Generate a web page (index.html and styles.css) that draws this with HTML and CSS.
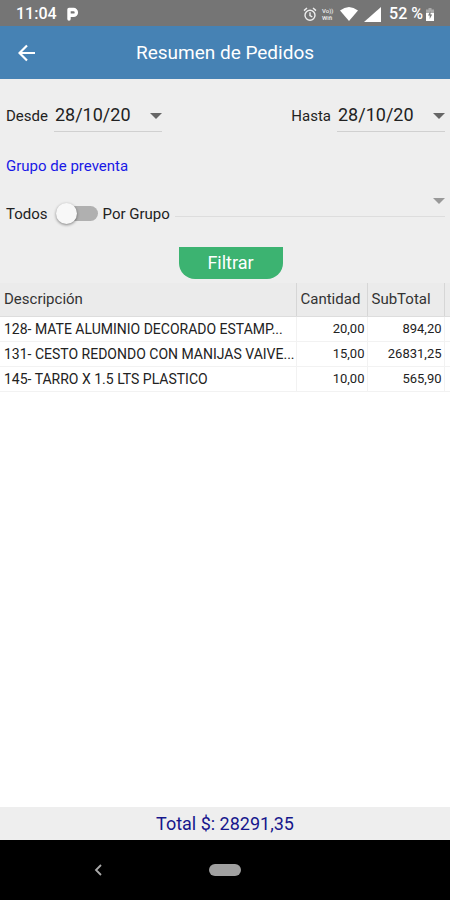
FILE: index.html
```html
<!DOCTYPE html>
<html lang="es">
<head>
<meta charset="utf-8">
<meta name="viewport" content="width=device-width, initial-scale=1">
<title>Resumen de Pedidos</title>
<link rel="stylesheet" href="styles.css">
</head>
<body>
<div class="status">
  <span class="status-time">11:04</span>
  <svg class="status-app" width="12" height="14" viewBox="0 0 12 14" aria-hidden="true"><path d="M2 12V2.500H6.500A2.900 2.900 0 0 1 6.500 8.300H3" fill="none" stroke="#fff" stroke-width="3.400" stroke-linecap="round" stroke-linejoin="round"/></svg>
  <div class="status-icons">
    <svg width="14" height="15" viewBox="0 0 14 15" aria-hidden="true"><g fill="none" stroke="#eee" stroke-width="1.400"><circle cx="7" cy="8.300" r="5"/><path d="M1 3.600 4 1M13 3.600 10 1M7 5.300V8.500L9.300 10"/></g></svg>
    <span class="vowifi"><span>Vo))</span><span>Wifi</span></span>
    <svg width="18" height="14" viewBox="0 0 18 14" aria-hidden="true"><path d="M0 3.500Q9-3.500 18 3.500L9 14Z" fill="#fff"/></svg>
    <svg class="signal" width="17" height="15" viewBox="0 0 17 15" aria-hidden="true"><path d="M0 15 17 0V15Z" fill="#fff"/></svg>
    <span>52 %</span>
    <svg width="8" height="13" viewBox="0 0 8 13" aria-hidden="true"><path d="M2.500 0h3v1.500H8V5H0V1.500h2.500Z" fill="#aaa"/><path d="M0 5H8V13H0Z" fill="#fff"/><path d="M4.500 3 2 7.500H3.700V11L6.200 6.500H4.500Z" fill="#777"/></svg>
  </div>
</div>
<header class="appbar">
  <button class="back" type="button" aria-label="Volver"><svg width="18" height="18" viewBox="0 0 18 18" aria-hidden="true"><path d="M17 9H2M9 1.500 1.500 9 9 16.500" fill="none" stroke="#fff" stroke-width="2.200"/></svg></button>
  <h1>Resumen de Pedidos</h1>
</header>
<main>
  <form class="filters">
    <div class="dates">
      <div class="field"><label for="desde">Desde</label><span class="picker"><select id="desde"><option>28/10/20</option></select></span></div>
      <div class="field"><label for="hasta">Hasta</label><span class="picker"><select id="hasta"><option>28/10/20</option></select></span></div>
    </div>
    <h2>Grupo de preventa</h2>
    <div class="group">
      <label for="modo">Todos</label>
      <input class="switch" id="modo" type="checkbox" role="switch">
      <label for="grupo">Por Grupo</label>
      <span class="picker picker-group"><select id="grupo" disabled><option></option></select></span>
    </div>
    <button class="filter" type="button">Filtrar</button>
  </form>
  <table>
    <colgroup><col><col class="col-qty"><col class="col-sub"><col class="col-end"></colgroup>
    <thead><tr><th>Descripción</th><th>Cantidad</th><th>SubTotal</th><td></td></tr></thead>
    <tbody>
      <tr><td>128- MATE ALUMINIO DECORADO ESTAMP...</td><td>20,00</td><td>894,20</td><td></td></tr>
      <tr><td>131- CESTO REDONDO CON MANIJAS VAIVE...</td><td>15,00</td><td>26831,25</td><td></td></tr>
      <tr><td>145- TARRO X 1.5 LTS PLASTICO</td><td>10,00</td><td>565,90</td><td></td></tr>
    </tbody>
  </table>
</main>
<footer class="total">Total $: 28291,35</footer>
<nav class="navbar">
  <button type="button" aria-label="Atrás"><svg width="8" height="12" viewBox="0 0 8 12" aria-hidden="true"><path d="M7 1 2 6 7 11" fill="none" stroke="#aaa" stroke-width="1.800"/></svg></button>
  <button class="home" type="button" aria-label="Inicio"></button>
</nav>
</body>
</html>
```
FILE: styles.css
```css
* { box-sizing: border-box; }
body {
  margin: 0;
  min-height: 100vh;
  display: flex;
  flex-direction: column;
  background: #fff;
  color: #222;
  font: 15px/20px Roboto, sans-serif;
}
button { border: 0; padding: 0; background: none; font: inherit; }
svg { display: block; }
h1, h2 { margin: 0; font-weight: 400; }

.status {
  display: flex;
  align-items: center;
  height: 26px;
  padding: 2px 16px 0;
  background: #757575;
  color: #fff;
  font-size: 16px;
  font-weight: 500;
}
.status-app { margin-left: 10px; }
.status-icons { display: flex; align-items: center; gap: 3px; margin-left: auto; }
.vowifi { display: flex; flex-direction: column; width: 14px; margin: 0 1px 0 2px; font-size: 6px; line-height: 7px; color: #eee; }
.signal { margin: 0 5px 0 3px; }

.appbar {
  display: grid;
  grid-template-columns: 36px 1fr 36px;
  align-items: center;
  height: 53px;
  background: #4682b4;
  color: #fff;
}
.back { display: flex; justify-content: flex-end; }
.appbar h1 { font-size: 19px; line-height: 24px; text-align: center; }

.filters { padding: 20px 5px 4px 6px; background: #eee; }
.dates { display: flex; justify-content: space-between; }
.field { display: flex; align-items: center; gap: 6px; height: 33px; }
.picker {
  position: relative;
  display: block;
  width: 108px;
  height: 33px;
  border-bottom: 1px solid #d0d0d0;
}
.picker::after {
  content: "";
  position: absolute;
  top: 14px;
  right: 0;
  border: 6px solid transparent;
  border-top-color: #666;
  border-bottom: 0;
}
.picker select {
  appearance: none;
  width: 100%;
  height: 32px;
  border: 0;
  padding: 0 0 0 1px;
  background: none;
  color: #222;
  font: 18px/24px Roboto, sans-serif;
}
.filters h2 { margin: 24px 0; color: #1919e6; font-size: 15px; line-height: 20px; }
.group { display: flex; align-items: center; height: 27px; gap: 5px; }
.switch {
  appearance: none;
  position: relative;
  width: 42px;
  height: 15px;
  margin: 0 0 0 3px;
  border-radius: 8px;
  background: linear-gradient(90deg, transparent 8px, #b0b0b0 8px);
}
.switch::before {
  content: "";
  position: absolute;
  top: -3px;
  left: 0;
  width: 21px;
  height: 21px;
  border-radius: 50%;
  background: #f8f8f8;
  box-shadow: 0 1px 3px #0007;
}
.picker-group { flex: 1; align-self: flex-end; margin-bottom: 10px; border-color: #ddd; }
.picker-group::after { border-top-color: #999; }
.filter {
  display: block;
  width: 104px;
  height: 32px;
  margin: 20px auto 0 calc(50% - 47px);
  border-radius: 0 0 16px 16px;
  background: #3cb371;
  color: #fff;
  font-size: 18px;
}

table { width: 100%; table-layout: fixed; border-collapse: collapse; }
.col-qty { width: 71px; }
.col-sub { width: 77px; }
.col-end { width: 6px; }
thead { background: #ebebeb; }
th, thead td { height: 33px; border-bottom: 1px solid #ddd; }
th { padding: 0 4px; border-right: 1px solid #d6d6d6; text-align: left; font-size: 15px; font-weight: 400; color: #333; }
tbody td {
  height: 25px;
  padding: 0 2px;
  border-right: 1px solid #f2f2f2;
  border-bottom: 1px solid #f2f2f2;
  font-size: 13px;
  text-align: right;
  white-space: nowrap;
}
tbody td:first-child { padding: 0 4px; font-size: 14px; text-align: left; }
th:last-child, td:last-child { padding: 0; border-right: 0; }

.total {
  margin-top: auto;
  padding: 5px 0 4px;
  background: #eee;
  color: #16168c;
  font-size: 18px;
  line-height: 24px;
  text-align: center;
}
.navbar {
  display: grid;
  grid-template-columns: 1fr 32px 1fr;
  align-items: center;
  height: 60px;
  background: #000;
}
.navbar button:first-child { justify-self: center; margin-right: 14px; }
.home { width: 32px; height: 12px; border-radius: 6px; background: #a0a0a0; }
```
